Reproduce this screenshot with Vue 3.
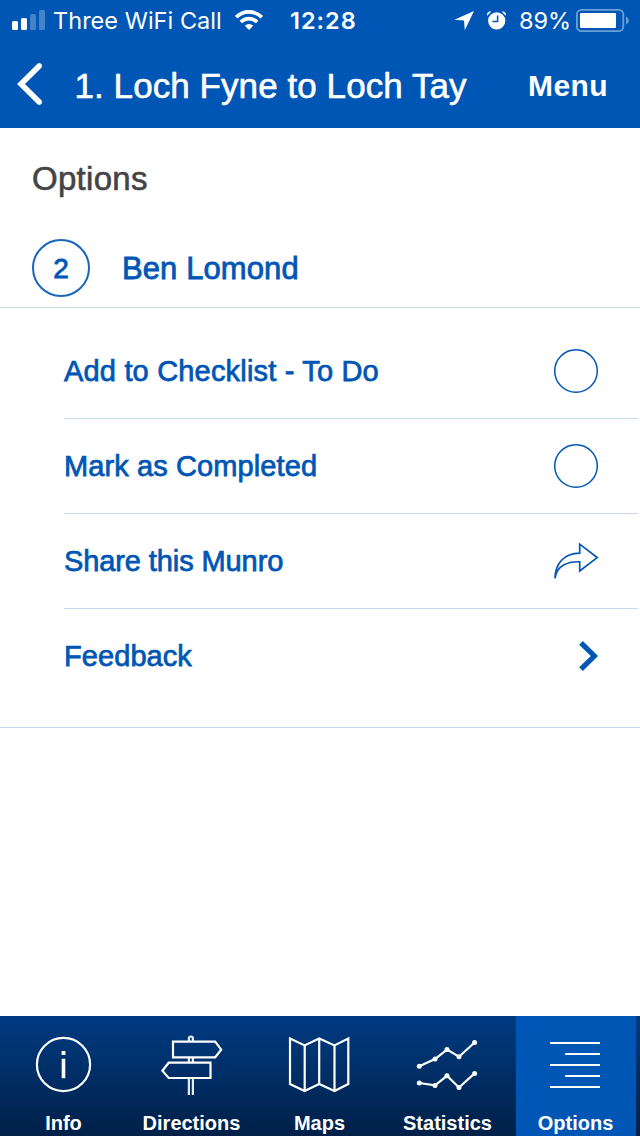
<script setup>
const tabs = [
  { id: 'info', label: 'Info', x: 4 },
  { id: 'directions', label: 'Directions', x: 132 },
  { id: 'maps', label: 'Maps', x: 260 },
  { id: 'statistics', label: 'Statistics', x: 388 },
  { id: 'options', label: 'Options', x: 516 },
]
const rows = [
  { id: 'todo', label: 'Add to Checklist - To Do', icon: 'circle' },
  { id: 'done', label: 'Mark as Completed', icon: 'circle' },
  { id: 'share', label: 'Share this Munro', icon: 'share' },
  { id: 'feedback', label: 'Feedback', icon: 'chevron' },
]
const upper = [[419.3, 1066.3], [435, 1059], [447, 1049.6], [459, 1056.7], [474.6, 1042.5]]
const lower = [[419.3, 1083], [435, 1085.4], [447, 1075.8], [459, 1087.6], [474.6, 1073.4]]
const line = (pts) => pts.map((p) => p.join(',')).join(' ')
</script>

<template>
  <div class="screen">
    <header class="top">
      <div class="status">
        <svg class="signal" width="34" height="40" viewBox="0 0 34 40" fill="#fff">
          <rect x="0" y="21" width="6" height="9" rx="1.5" />
          <rect x="9" y="18" width="6" height="12" rx="1.5" />
          <rect x="18" y="14" width="6" height="16" rx="1.5" opacity=".27" />
          <rect x="27" y="10" width="6" height="20" rx="1.5" opacity=".27" />
        </svg>
        <span class="carrier">Three WiFi Call</span>
        <svg class="wifi" width="28" height="40" viewBox="235 0 28 40">
          <g fill="none" stroke="#fff" stroke-width="3.6">
            <path d="M236.2 17.2a18 18 0 0 1 25.6 0" />
            <path d="M240.8 22a11.6 11.6 0 0 1 16.4 0" />
          </g>
          <path d="M249 30l-4.2-4.2a6 6 0 0 1 8.4 0z" fill="#fff" />
        </svg>
        <span class="time">12:28</span>
        <svg class="system" width="54" height="40" viewBox="454 0 54 40">
          <path d="M474 11L454.5 19.8l9.5.8.8 9.6z" fill="#fff" />
          <circle cx="496.7" cy="20.8" r="8.6" fill="#fff" />
          <path d="M497.6 15.4v6.2h-5.2" fill="none" stroke="#0056b5" stroke-width="1.5" />
          <path d="M487.2 15.8c-.8-2.6.8-4.6 4.2-4.4zM505.8 15.8c.8-2.6-.8-4.6-4.2-4.4z" fill="#fff" />
        </svg>
        <span class="percent">89%</span>
        <svg class="battery" width="54" height="40" viewBox="576 0 54 40">
          <rect x="576.9" y="9.9" width="46.4" height="21.2" rx="4.5" fill="none" stroke="#6c9fd4" stroke-width="1.8" />
          <rect x="580" y="13" width="36" height="15" rx="1.2" fill="#fff" />
          <path d="M626 16.5q2.8 1.2 2.8 4t-2.8 4z" fill="#6c9fd4" />
        </svg>
      </div>
      <div class="nav">
        <svg class="back" width="26" height="44" viewBox="17 62 26 44">
          <path d="M39.2 66L21 84l18.2 18" fill="none" stroke="#fff" stroke-width="5.6" stroke-linecap="round" />
        </svg>
        <h1 class="title">1. Loch Fyne to Loch Tay</h1>
        <span class="menu">Menu</span>
      </div>
    </header>

    <main class="content">
      <h2 class="heading">Options</h2>
      <div class="munro">
        <span class="badge">2</span>
        <span class="name">Ben Lomond</span>
      </div>
      <ul class="list">
        <li v-for="row in rows" :key="row.id" class="row">
          <span :class="['label', row.id]">{{ row.label }}</span>
          <svg class="icon" width="46" height="46" viewBox="0 0 46 46" fill="none" stroke="#0056b5">
            <circle v-if="row.icon === 'circle'" cx="23" cy="23" r="21.3" stroke-width="1.5" />
            <path v-else-if="row.icon === 'share'" d="M2 40.3C2.3 25.5 11 15.4 26.7 15.2v-9L44.2 19.6 26.7 33v-9.2C15 23.4 3.6 27.5 2 40.3z" stroke-width="1.7" />
            <path v-else d="M28 9.8L41.4 23 28 36.2" stroke-width="5.2" />
          </svg>
        </li>
      </ul>
    </main>

    <nav class="tabs">
      <div v-for="tab in tabs" :key="tab.id" :class="['tab', { active: tab.id === 'options' }]">
        <svg width="120" height="92" :viewBox="`${tab.x} 1016 120 92`" fill="none" stroke="#fff" stroke-width="2.2">
          <template v-if="tab.id === 'info'">
            <circle cx="63.5" cy="1064.5" r="26.6" />
            <path d="M63.5 1058.8V1078.2" stroke-width="3.6" />
            <path d="M63.5 1051V1055" stroke-width="3.8" />
          </template>
          <template v-else-if="tab.id === 'directions'">
            <path d="M188.9 1041v-2.5a2 2 0 0 1 4 0v2.5M188.9 1058v4M192.9 1058v4M188.9 1079v16M192.9 1079v16" stroke="#e6edf7" />
            <path d="M173 1041.7h42.2l6 8-6 7.6H173zM210.5 1062.7h-41.8l-6.3 8 6.3 7.3h41.8z" />
          </template>
          <template v-else-if="tab.id === 'maps'">
            <path d="M290 1038.5v45.5l14.6 7 14.6-7 15.3 7 13.8-7v-45.5l-13.8 6.9-15.3-6.9-14.6 6.9z" />
            <path d="M304.7 1045.5v45M319.2 1038.5v45M334.5 1045.5v45" />
          </template>
          <template v-else-if="tab.id === 'statistics'">
            <polyline :points="line(upper)" />
            <polyline :points="line(lower)" />
            <circle v-for="(p, i) in [...upper, ...lower]" :key="i" :cx="p[0]" :cy="p[1]" r="2.5" fill="#fff" stroke="none" />
          </template>
          <path v-else d="M550 1043h50M565 1054h35M550 1065h50M565 1076h35M550 1087h50" />
        </svg>
        <span class="tab-label">{{ tab.label }}</span>
      </div>
    </nav>
  </div>
</template>

<style>
body { margin: 0; background: #fff; }
</style>

<style scoped>
.screen {
  width: 640px;
  height: 1136px;
  display: flex;
  flex-direction: column;
  overflow: hidden;
  background: #fff;
  color: #0056b5;
  font-family: "Liberation Sans", Arial, sans-serif;
}
.screen span, .screen h1, .screen h2 { white-space: nowrap; }
.top { height: 128px; background: #0056b5; color: #fff; flex: none; }
.status {
  height: 40px;
  display: flex;
  align-items: center;
  font-family: Inter, sans-serif;
  font-size: 23.5px;
  line-height: 40px;
}
.status svg { flex: none; }
.status span { flex: none; box-sizing: border-box; padding-top: 2px; }
.signal { margin-left: 12px; }
.carrier { width: 189px; padding-left: 7px; letter-spacing: .03px; }
.time { width: 191px; padding-left: 27px; font-weight: 600; letter-spacing: 1px; }
.percent { width: 68px; padding-left: 11px; }
.nav { height: 88px; display: flex; align-items: center; }
.back { margin-left: 17px; flex: none; }
.title {
  margin: 3px 0 0 31.5px;
  width: 453.5px;
  font-size: 35px;
  font-weight: 400;
  letter-spacing: .07px;
  -webkit-text-stroke: .6px #fff;
}
.menu { margin-top: 4px; font-size: 30px; font-weight: 700; letter-spacing: .4px; }
.content { flex: 1; }
.heading {
  margin: 0;
  padding-left: 32px;
  height: 101px;
  line-height: 102px;
  font-size: 33px;
  font-weight: 400;
  letter-spacing: .3px;
  color: #444;
  -webkit-text-stroke: .6px #444;
}
.munro {
  height: 78px;
  display: flex;
  align-items: center;
  padding-left: 32px;
  border-bottom: 1px solid #cfdde9;
}
.badge {
  width: 58px;
  height: 58px;
  box-sizing: border-box;
  border: 2px solid #1a66bd;
  border-radius: 50%;
  line-height: 55px;
  text-align: center;
  font-size: 28px;
  -webkit-text-stroke: .8px #0056b5;
}
.name { margin-left: 32px; padding-top: 2px; font-size: 31px; letter-spacing: .1px; -webkit-text-stroke: .8px #0056b5; }
.list { margin: 0; padding: 16px 2px 24px 64px; list-style: none; border-bottom: 1px solid #c8dbee; }
.row {
  height: 94px;
  display: flex;
  align-items: center;
  justify-content: space-between;
  padding-right: 39px;
  border-bottom: 1px solid #c8dbee;
}
.row:last-child { border-bottom: 0; }
.label { font-size: 29px; letter-spacing: .18px; -webkit-text-stroke: .75px #0056b5; }
.label.done { letter-spacing: .1px; }
.label.share { letter-spacing: -.1px; }
.label.feedback { letter-spacing: .07px; }
.tabs {
  height: 120px;
  flex: none;
  display: flex;
  background: linear-gradient(#003b82, #002048);
  color: #fff;
}
.tab { width: 120px; margin: 0 4px; display: flex; flex-direction: column; align-items: center; }
.tab.active { background: #0056b5; }
.tab svg { flex: none; }
.tab-label { height: 28px; line-height: 30px; margin-left: -1px; font-size: 20px; font-weight: 700; }
</style>
